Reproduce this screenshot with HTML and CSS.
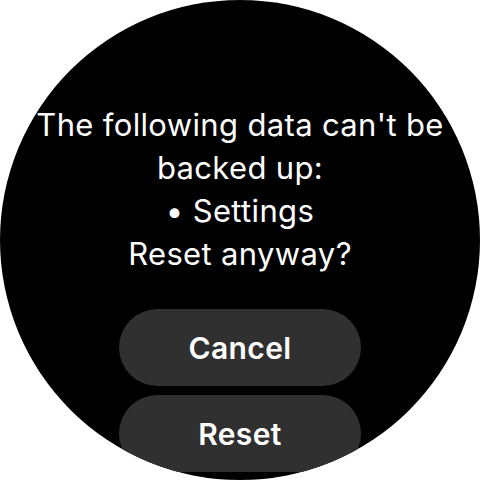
FILE: index.html
```html
<!DOCTYPE html>
<html>
<head>
<meta charset="utf-8">
<link rel="stylesheet" href="styles.css">
</head>
<body>
<div class="watch">
  <div class="message">
    <p class="text">The following data can't be backed up:</p>
    <p class="text">• Settings</p>
    <p class="text">Reset anyway?</p>
  </div>
  <div class="actions">
    <button class="btn">Cancel</button>
    <button class="btn">Reset</button>
  </div>
</div>
</body>
</html>
```
FILE: styles.css
```css
html, body {
  margin: 0;
  padding: 0;
  background: #ffffff;
}
.watch {
  width: 480px;
  height: 480px;
  border-radius: 50%;
  background: #000000;
  overflow: hidden;
  display: flex;
  flex-direction: column;
  align-items: center;
  box-sizing: border-box;
  padding-top: 103px;
  font-family: Inter, "Noto Sans", sans-serif;
  color: #ffffff;
}
.message {
  width: 440px;
  text-align: center;
}
.text {
  margin: 0;
  font-size: 31px;
  line-height: 43px;
  letter-spacing: 0.35px;
}
.actions {
  margin-top: 34px;
  display: flex;
  flex-direction: column;
  align-items: center;
  gap: 9px;
}
.btn {
  width: 242px;
  height: 77px;
  border: none;
  border-radius: 39px;
  background: #303030;
  color: #ffffff;
  font-family: Inter, "Noto Sans", sans-serif;
  font-weight: 600;
  font-size: 30px;
  letter-spacing: 0.4px;
  padding: 0;
  flex-shrink: 0;
}
```
